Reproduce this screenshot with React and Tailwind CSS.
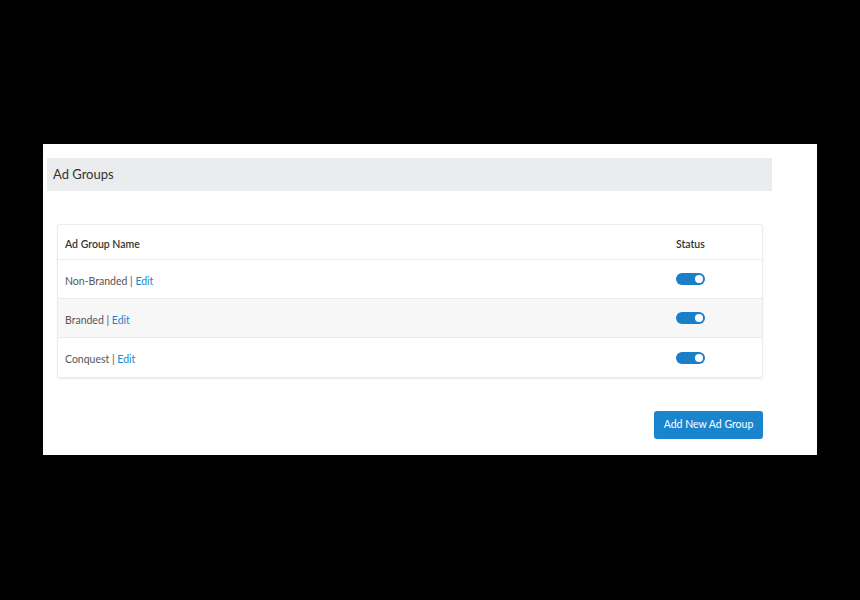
import React from "react";

const rows = ["Non-Branded", "Branded", "Conquest"];

function Toggle() {
  return (
    <div className="w-[29px] h-[12px] rounded-full bg-[#1a7fc8] flex items-center justify-end pr-[2px]">
      <div className="w-[8px] h-[8px] rounded-full bg-white" />
    </div>
  );
}

export default function App() {
  return (
    <div
      className="w-[860px] h-[600px] bg-black pt-[144px] pl-[43px]"
      style={{ fontFamily: "Lato, 'Open Sans', sans-serif" }}
    >
      <div className="w-[774px] h-[311px] bg-white pt-[14px] pl-[4px]">
        <div className="w-[725px] h-[33px] bg-[#ebecee] flex items-center pl-[6px] text-[13px] text-[#333]">
          Ad Groups
        </div>

        <div className="ml-[10px] mt-[33px] w-[706px] border border-[#ececec] rounded-[2px] shadow-[0_1px_2px_rgba(0,0,0,0.08)] text-[10.5px]">
          <div className="h-[35px] flex items-center pl-[7px] font-semibold text-[#333] border-b border-[#ececec]">
            <div className="w-[611px] pt-[6px]">Ad Group Name</div>
            <div className="pt-[6px]">Status</div>
          </div>
          {rows.map((name, i) => (
            <div
              key={name}
              className={
                "h-[39px] flex items-center pl-[7px] text-[#555] " +
                (i === 1 ? "bg-[#f7f7f7] " : "") +
                (i < rows.length - 1 ? "border-b border-[#ececec]" : "")
              }
            >
              <div className="w-[611px] pt-[5px]">
                {name} | <span className="text-[#1a86d0]">Edit</span>
              </div>
              <Toggle />
            </div>
          ))}
        </div>

        <div className="w-[716px] flex justify-end mt-[33px]">
          <button className="w-[109px] h-[28px] rounded-[3px] bg-[#1985cf] text-white text-[10.5px]">
            Add New Ad Group
          </button>
        </div>
      </div>
    </div>
  );
}
